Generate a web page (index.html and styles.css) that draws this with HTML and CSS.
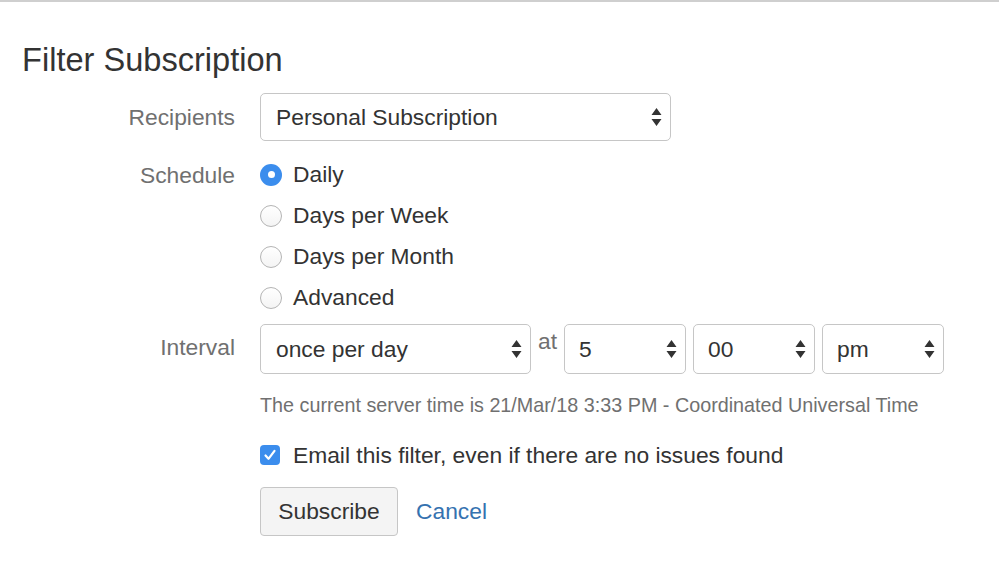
FILE: index.html
```html
<!DOCTYPE html>
<html>
<head>
<meta charset="utf-8">
<link rel="stylesheet" href="styles.css">
</head>
<body>
<div class="page">
  <h2 class="title">Filter Subscription</h2>
  <form class="form">
    <div class="label label-recipients">Recipients</div>
    <div class="field">
      <div class="select select-wide">
        <span>Personal Subscription</span>
        <svg class="arrows" width="11" height="20" viewBox="0 0 11 20"><path d="M5.5 1 L10.5 8 L0.5 8 Z M5.5 19 L10.5 12 L0.5 12 Z" fill="#333"/></svg>
      </div>
    </div>

    <div class="label label-schedule">Schedule</div>
    <div class="field radios">
      <div class="radio-row"><span class="radio checked"></span><span>Daily</span></div>
      <div class="radio-row"><span class="radio"></span><span>Days per Week</span></div>
      <div class="radio-row"><span class="radio"></span><span>Days per Month</span></div>
      <div class="radio-row"><span class="radio"></span><span>Advanced</span></div>
    </div>

    <div class="label label-interval">Interval</div>
    <div class="field interval">
      <div class="select select-interval">
        <span>once per day</span>
        <svg class="arrows" width="11" height="20" viewBox="0 0 11 20"><path d="M5.5 1 L10.5 8 L0.5 8 Z M5.5 19 L10.5 12 L0.5 12 Z" fill="#333"/></svg>
      </div>
      <span class="at">at</span>
      <div class="select select-small">
        <span>5</span>
        <svg class="arrows" width="11" height="20" viewBox="0 0 11 20"><path d="M5.5 1 L10.5 8 L0.5 8 Z M5.5 19 L10.5 12 L0.5 12 Z" fill="#333"/></svg>
      </div>
      <div class="select select-small">
        <span>00</span>
        <svg class="arrows" width="11" height="20" viewBox="0 0 11 20"><path d="M5.5 1 L10.5 8 L0.5 8 Z M5.5 19 L10.5 12 L0.5 12 Z" fill="#333"/></svg>
      </div>
      <div class="select select-small">
        <span>pm</span>
        <svg class="arrows" width="11" height="20" viewBox="0 0 11 20"><path d="M5.5 1 L10.5 8 L0.5 8 Z M5.5 19 L10.5 12 L0.5 12 Z" fill="#333"/></svg>
      </div>
    </div>

    <div class="label"></div>
    <div class="field description">The current server time is 21/Mar/18 3:33 PM - Coordinated Universal Time</div>

    <div class="label"></div>
    <div class="field check-row">
      <span class="checkbox"><svg width="20" height="20" viewBox="0 0 20 20"><path d="M5.5 10.5 L8.5 13.8 L14.5 5.8" fill="none" stroke="#fff" stroke-width="2.2" stroke-linecap="round" stroke-linejoin="round"/></svg></span>
      <span>Email this filter, even if there are no issues found</span>
    </div>

    <div class="label"></div>
    <div class="field buttons">
      <span class="button">Subscribe</span>
      <a class="cancel" href="#">Cancel</a>
    </div>
  </form>
</div>
</body>
</html>
```

FILE: styles.css
```css
html, body {
  margin: 0;
  padding: 0;
  background: #fff;
}

body {
  font-family: "Liberation Sans", Arial, sans-serif;
  color: #333;
  font-size: 22.8px;
  border-top: 2px solid #cfcfcf;
}

.page {
  padding: 0 0 0 22px;
}

.title {
  margin: 0;
  padding-top: 38px;
  font-size: 32.6px;
  font-weight: normal;
  line-height: 40px;
  color: #333;
}

.form {
  display: grid;
  grid-template-columns: 213px 1fr;
  column-gap: 25px;
  margin-top: 13px;
}

.label {
  text-align: right;
  color: #707070;
  line-height: 28px;
}

.label-recipients {
  padding-top: 10px;
}

.label-schedule {
  margin-top: 20px;
}

.label-interval {
  margin-top: 15px;
}

.select {
  box-sizing: border-box;
  display: flex;
  align-items: center;
  justify-content: space-between;
  height: 48px;
  padding: 0 8px 0 15px;
  border: 1px solid #c6c6c6;
  border-radius: 5px;
  background: #fff;
  color: #333;
}

.select-wide {
  width: 411px;
}

.select-interval {
  width: 271px;
}

.select-small {
  width: 122px;
  padding-left: 14px;
}

.arrows {
  display: block;
  flex: none;
}

.radios {
  display: flex;
  flex-direction: column;
  margin-top: 20px;
}

.radio-row {
  display: flex;
  align-items: center;
  height: 41px;
  gap: 11px;
}

.radio-row:first-child {
  margin-top: -7px;
}

.radio {
  box-sizing: border-box;
  width: 22px;
  height: 22px;
  border-radius: 50%;
  border: 1px solid #b4b4b4;
  background: linear-gradient(#ffffff, #f4f4f4);
  display: flex;
  align-items: center;
  justify-content: center;
  flex: none;
}

.radio.checked {
  border: none;
  background: #3b8ded;
}

.radio.checked::after {
  content: "";
  width: 7px;
  height: 7px;
  border-radius: 50%;
  background: #fff;
}

.interval {
  display: flex;
  align-items: flex-start;
  gap: 7px;
  margin-top: 6px;
  height: 50px;
}

.select-interval, .select-small {
  height: 50px;
}

.at {
  color: #707070;
  line-height: 28px;
  margin-top: 3px;
}

.description {
  grid-column: 2;
  font-size: 19.75px;
  color: #707070;
  margin-top: 19px;
  line-height: 24px;
}

.check-row {
  display: flex;
  align-items: center;
  gap: 13px;
  margin-top: 24px;
  height: 28px;
}

.checkbox {
  width: 20px;
  height: 20px;
  border-radius: 4px;
  background: #3b8ded;
  display: flex;
  flex: none;
}

.buttons {
  display: flex;
  align-items: center;
  gap: 18px;
  margin-top: 18px;
}

.button {
  box-sizing: border-box;
  display: flex;
  align-items: center;
  justify-content: center;
  width: 138px;
  height: 49px;
  border: 1px solid #c6c6c6;
  border-radius: 4px;
  background: #f4f4f4;
  color: #333;
}

.cancel {
  color: #3572b0;
  text-decoration: none;
}
```
